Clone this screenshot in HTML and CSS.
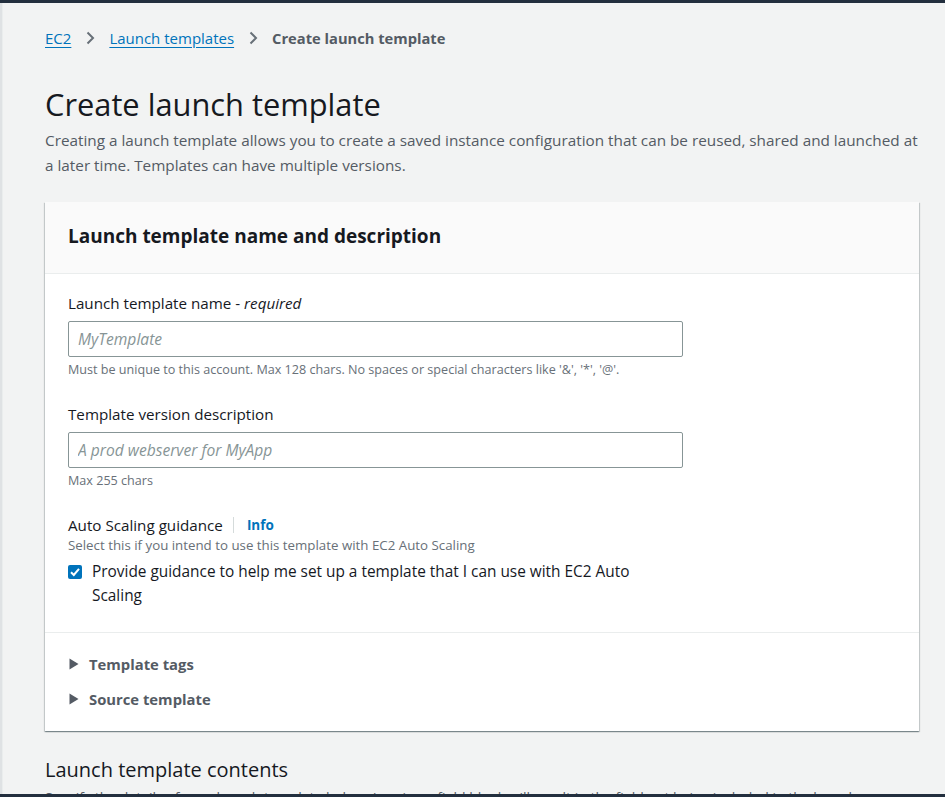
FILE: index.html
```html
<!DOCTYPE html>
<html lang="en">
<head>
<meta charset="utf-8">
<title>Create launch template</title>
<link rel="stylesheet" href="styles.css">
</head>
<body>
<div class="topbar"></div>
<div class="layout">
  <div class="rail"></div>
  <main class="main">
    <nav class="breadcrumbs">
      <a class="crumb-link" href="#">EC2</a>
      <svg class="crumb-sep" width="16" height="16" viewBox="0 0 16 16"><path d="M5.5 2.5 11 8l-5.5 5.5" fill="none" stroke="#687078" stroke-width="2"/></svg>
      <a class="crumb-link" href="#">Launch templates</a>
      <svg class="crumb-sep" width="16" height="16" viewBox="0 0 16 16"><path d="M5.5 2.5 11 8l-5.5 5.5" fill="none" stroke="#687078" stroke-width="2"/></svg>
      <span class="crumb-current">Create launch template</span>
    </nav>
    <h1 class="page-title">Create launch template</h1>
    <p class="page-desc">Creating a launch template allows you to create a saved instance configuration that can be reused, shared and launched at a later time. Templates can have multiple versions.</p>

    <section class="card">
      <header class="card-header">
        <h2 class="card-title">Launch template name and description</h2>
      </header>
      <div class="card-body">
        <div class="field">
          <label class="field-label">Launch template name - <i>required</i></label>
          <input class="text-input" type="text" placeholder="MyTemplate">
          <div class="field-hint">Must be unique to this account. Max 128 chars. No spaces or special characters like '&amp;', '*', '@'.</div>
        </div>
        <div class="field">
          <label class="field-label">Template version description</label>
          <input class="text-input" type="text" placeholder="A prod webserver for MyApp">
          <div class="field-hint">Max 255 chars</div>
        </div>
        <div class="field">
          <div class="label-row">
            <span class="field-label">Auto Scaling guidance</span>
            <span class="label-divider"></span>
            <a class="info-link" href="#">Info</a>
          </div>
          <div class="field-hint tight">Select this if you intend to use this template with EC2 Auto Scaling</div>
          <div class="checkbox-row">
            <span class="checkbox">
              <svg width="14" height="14" viewBox="0 0 14 14"><path d="M3 7.2 5.8 10 11 3.8" fill="none" stroke="#fff" stroke-width="2"/></svg>
            </span>
            <span class="checkbox-text">Provide guidance to help me set up a template that I can use with EC2 Auto Scaling</span>
          </div>
        </div>
      </div>
      <div class="card-expandables">
        <div class="expandable">
          <svg class="caret" width="10" height="12" viewBox="0 0 10 12"><path d="M0.5 0.5l9 5.5-9 5.5z" fill="#545b64"/></svg>
          <span>Template tags</span>
        </div>
        <div class="expandable">
          <svg class="caret" width="10" height="12" viewBox="0 0 10 12"><path d="M0.5 0.5l9 5.5-9 5.5z" fill="#545b64"/></svg>
          <span>Source template</span>
        </div>
      </div>
    </section>

    <h2 class="section-title">Launch template contents</h2>
    <p class="section-desc">Specify the details of your launch template below. Leaving a field blank will result in the field not being included in the launch template.</p>
  </main>
</div>
<div class="bottombar"></div>
</body>
</html>
```

FILE: styles.css
```css
html, body {
  margin: 0;
  padding: 0;
  background: #f2f3f3;
  height: 100%;
  overflow: hidden;
}
body {
  font-family: "Open Sans", "Noto Sans", sans-serif;
  color: #16191f;
  font-size: 14px;
}
.topbar {
  height: 3px;
  background: #232f3e;
}
.bottombar {
  position: fixed;
  left: 0;
  right: 0;
  bottom: 0;
  height: 3px;
  background: #232f3e;
}
.layout {
  display: flex;
  min-height: 794px;
}
.rail {
  width: 2px;
  background: #dfe2e4;
  border-right: 1px solid #eaeded;
  flex: none;
}
.main {
  flex: 1;
  padding: 25px 26px 0 42px;
}
.breadcrumbs {
  display: flex;
  align-items: center;
  gap: 11px;
  height: 20px;
  line-height: 20px;
  font-size: 15px;
}
.crumb-link {
  color: #0073bb;
  text-decoration: underline;
  text-underline-offset: 3px;
}
.crumb-sep { flex: none; }
.crumb-current {
  color: #545b64;
  font-weight: 700;
  font-size: 14.7px;
}
.page-title {
  margin: 38px 0 0;
  font-size: 30.8px;
  font-weight: 400;
  line-height: 36px;
  color: #16191f;
}
.page-desc {
  margin: 6px 0 0;
  font-size: 15.3px;
  line-height: 25px;
  color: #545b64;
}
.card {
  margin-top: 24px;
  background: #fff;
  box-shadow: 0 1px 1px 0 rgba(0, 28, 36, 0.3), 1px 1px 1px 0 rgba(0, 28, 36, 0.15), -1px 1px 1px 0 rgba(0, 28, 36, 0.15);
}
.card-header {
  background: #fafafa;
  border-bottom: 1px solid #eaeded;
  padding: 22px 23px 25px;
}
.card-title {
  margin: 0;
  font-size: 19px;
  line-height: 24px;
  font-weight: 700;
}
.card-body {
  padding: 19px 23px 24px;
  border-bottom: 1px solid #eaeded;
}
.field + .field { margin-top: 26px; }
.field-label {
  display: block;
  font-size: 15.2px;
  line-height: 20px;
  color: #16191f;
}
.text-input {
  display: block;
  box-sizing: border-box;
  margin-top: 8px;
  width: 615px;
  height: 36px;
  border: 1px solid #879596;
  border-radius: 2px;
  padding: 0 9px;
  font-family: inherit;
  font-size: 15.6px;
  background: #fff;
}
.text-input::placeholder {
  color: #879596;
  font-style: italic;
}
.field-hint {
  margin-top: 4px;
  font-size: 12.6px;
  line-height: 17px;
  color: #687078;
}
.field-hint.tight {
  margin-top: 2px;
  font-size: 13.3px;
}
.label-row {
  display: flex;
  align-items: center;
  height: 20px;
}
.label-divider {
  width: 1px;
  height: 16px;
  background: #d5dbdb;
  margin: 0 13px 0 10px;
}
.info-link {
  color: #0073bb;
  font-weight: 700;
  font-size: 13.5px;
  text-decoration: none;
}
.checkbox-row {
  display: flex;
  align-items: flex-start;
  margin-top: 6px;
  width: 590px;
}
.checkbox {
  flex: none;
  width: 14px;
  height: 14px;
  margin-top: 5px;
  background: #0073bb;
  border-radius: 2px;
  display: flex;
}
.checkbox-text {
  margin-left: 10px;
  font-size: 15.4px;
  line-height: 24px;
}
.card-expandables {
  padding: 20px 23px 21px;
}
.expandable {
  display: flex;
  align-items: center;
  gap: 10px;
  height: 22px;
  font-size: 14.8px;
  font-weight: 700;
  color: #545b64;
}
.expandable + .expandable { margin-top: 13px; }
.caret { flex: none; margin-left: 1px; }
.section-title {
  margin: 25px 0 0;
  font-size: 20px;
  font-weight: 400;
  line-height: 28px;
}
.section-desc {
  margin: 4px 0 0;
  font-size: 14px;
  line-height: 20px;
  color: #545b64;
}
```
